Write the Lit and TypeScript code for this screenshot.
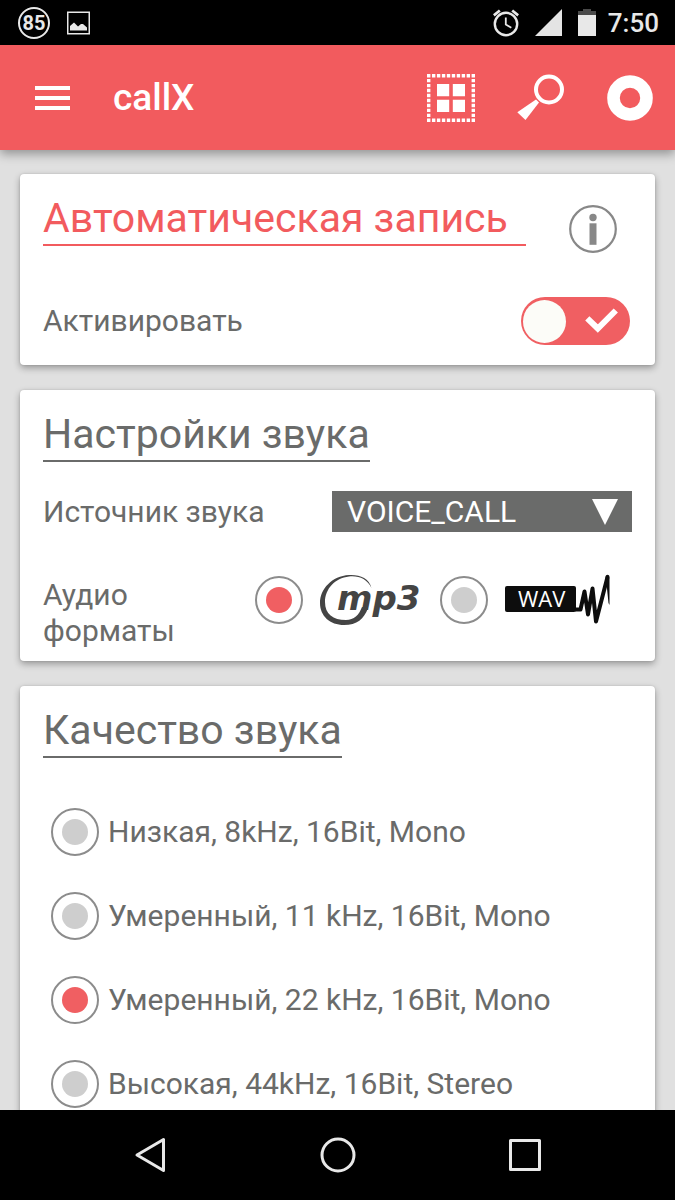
import { LitElement, html, css } from "lit";
import { customElement, state } from "lit/decorators.js";

const QUALITIES = [
  "Низкая, 8kHz, 16Bit, Mono",
  "Умеренный, 11 kHz, 16Bit, Mono",
  "Умеренный, 22 kHz, 16Bit, Mono",
  "Высокая, 44kHz, 16Bit, Stereo",
];

@customElement("status-bar")
class StatusBar extends LitElement {
  static styles = css`
    :host {
      display: flex;
      align-items: center;
      justify-content: space-between;
      height: 45px;
      padding: 0 16px 0 18px;
      background: #000;
      color: #e8e8e8;
      font-size: 26px;
      font-weight: 500;
      line-height: 32px;
    }
    .group {
      display: flex;
      align-items: center;
      gap: 16px;
    }
    .badge {
      display: grid;
      place-items: center;
      box-sizing: border-box;
      width: 32px;
      height: 32px;
      border: 2px solid #e8e8e8;
      border-radius: 50%;
      font-size: 20px;
      font-weight: 700;
      line-height: 28px;
    }
    .time {
      margin-left: -4px;
    }
    svg {
      display: block;
    }
  `;

  render() {
    return html`
      <div class="group">
        <span class="badge">85</span>
        <svg width="24" height="24" viewBox="0 0 24 24">
          <rect x="1.750" y="1.250" width="21.500" height="21.500" fill="none" stroke="#e8e8e8" stroke-width="1.500" />
          <path d="M4 19.500V15l4-3.500 4 4 3-2.500 2 0 4 3.500v3z" fill="#e8e8e8" />
        </svg>
      </div>
      <div class="group">
        <svg width="26" height="28" viewBox="0 0 26 28" fill="none" stroke="#e8e8e8">
          <circle cx="13" cy="15" r="11.200" stroke-width="2.400" />
          <path d="M12.800 8.500v7l5.500 3.300" stroke-width="1.800" />
          <path d="M.8 6.300l6-4.800M25.200 6.300l-6-4.800" stroke-width="2.800" />
        </svg>
        <svg width="27" height="27" viewBox="0 0 27 27"><path d="M27 0v27H0z" fill="#e4e4e4" /></svg>
        <svg width="18" height="27" viewBox="0 0 18 27">
          <path d="M0 6V2h5V0h8v2h5v4z" fill="#4a4a4a" />
          <path d="M0 6h18v21H0z" fill="#e8e8e8" />
        </svg>
        <span class="time">7:50</span>
      </div>
    `;
  }
}

@customElement("nav-bar")
class NavBar extends LitElement {
  static styles = css`
    :host {
      display: flex;
      height: 90px;
      padding: 0 56px;
      background: #000;
    }
    button {
      flex: 1;
      display: grid;
      place-items: center;
      padding: 0;
      border: 0;
      background: none;
    }
  `;

  render() {
    return html`
      <button aria-label="Назад">
        <svg width="36" height="36" viewBox="0 0 36 36" fill="none" stroke="#e8e8e8" stroke-width="3" stroke-linejoin="round">
          <path d="M31.500 2.500v31L5 18z" />
        </svg>
      </button>
      <button aria-label="Домой">
        <svg width="36" height="36" viewBox="0 0 36 36" fill="none" stroke="#e8e8e8" stroke-width="3">
          <circle cx="18" cy="18" r="16" />
        </svg>
      </button>
      <button aria-label="Обзор">
        <svg width="36" height="36" viewBox="0 0 36 36" fill="none" stroke="#e8e8e8" stroke-width="3" stroke-linejoin="round">
          <rect x="3.500" y="3.500" width="29" height="29" />
        </svg>
      </button>
    `;
  }
}

@customElement("app-root")
class AppRoot extends LitElement {
  @state() private quality = 2;
  @state() private format = "mp3";

  static styles = css`
    :host {
      display: flex;
      flex-direction: column;
      height: 100vh;
      background: #e0e0e0;
      color: #6a6b6a;
      font-family: Roboto, "Noto Sans", sans-serif;
      font-size: 30px;
      line-height: 36px;
    }
    svg {
      display: block;
    }
    button {
      padding: 0;
      border: 0;
      background: none;
    }
    input {
      margin: 0;
      appearance: none;
    }

    .toolbar {
      position: relative;
      z-index: 1;
      display: flex;
      align-items: center;
      height: 105px;
      padding: 0 22px 0 35px;
      background: #f25b5e;
      box-shadow: 0 4px 10px rgba(0, 0, 0, 0.35);
    }
    .title {
      flex: 1;
      margin: 0 0 0 43px;
      color: #fff;
      font-size: 37px;
      font-weight: 500;
      line-height: 44px;
    }
    .actions {
      display: flex;
      align-items: center;
      gap: 42px;
    }

    .content {
      flex: 1;
      min-height: 0;
      overflow-y: auto;
      scrollbar-width: none;
      display: flex;
      flex-direction: column;
      gap: 25px;
      padding: 24px 20px;
    }
    .card {
      flex: none;
      padding: 19px 23px 20px;
      border-radius: 4px;
      background: #fff;
      box-shadow: 0 3px 7px rgba(0, 0, 0, 0.32), 0 0 2px rgba(0, 0, 0, 0.15);
    }
    .card.sound {
      padding-bottom: 12px;
    }
    .heading {
      width: fit-content;
      margin: 0;
      border-bottom: 2px solid #6a6b6a;
      font-size: 41px;
      font-weight: 400;
      line-height: 51px;
    }
    .heading.accent {
      padding-right: 18px;
      border-color: #f25b5e;
      color: #f25b5e;
    }
    .head {
      display: flex;
      justify-content: space-between;
      align-items: flex-start;
    }
    .info {
      margin: 12px 15px 0 0;
    }
    .row {
      display: flex;
      justify-content: space-between;
      align-items: center;
      margin-top: 44px;
    }
    .row.source {
      margin-top: 29px;
    }
    .row.formats {
      align-items: flex-start;
      margin-top: 42px;
    }

    .switch,
    .picker {
      display: grid;
      align-items: center;
    }
    .switch > *,
    .picker > * {
      grid-area: 1 / 1;
    }
    .switch {
      margin-right: 2px;
    }
    .switch input {
      display: flex;
      align-items: center;
      width: 109px;
      height: 48px;
      padding: 0 2px;
      box-sizing: border-box;
      border-radius: 24px;
      background: #f05f62;
    }
    .switch input::before {
      content: "";
      width: 43px;
      height: 43px;
      border-radius: 50%;
      background: #fcfcf8;
    }
    .switch svg,
    .picker svg {
      justify-self: end;
      pointer-events: none;
    }
    .switch svg {
      margin-right: 12px;
    }
    .picker svg {
      margin-right: 14px;
    }
    .picker select {
      width: 300px;
      height: 41px;
      padding: 0 15px;
      border: 0;
      border-radius: 0;
      appearance: none;
      background: #6a6b6a;
      color: #fff;
      font: inherit;
    }

    .radio {
      flex: none;
      display: grid;
      place-items: center;
      box-sizing: border-box;
      width: 48px;
      height: 48px;
      border: 2px solid #8c8c8c;
      border-radius: 50%;
    }
    .radio::before {
      content: "";
      width: 26px;
      height: 26px;
      border-radius: 50%;
      background: #cecece;
    }
    .radio:checked::before {
      background: #f05f62;
    }
    .caption {
      flex: 1;
      padding-top: 3px;
    }
    .choices {
      display: flex;
      gap: 18px;
    }
    .choice {
      display: flex;
      align-items: center;
      gap: 17px;
    }
    .qualities {
      display: flex;
      flex-direction: column;
      gap: 36px;
      margin: 50px 0 0;
      padding: 0 8px;
      border: 0;
    }
    .quality {
      display: flex;
      align-items: center;
      gap: 9px;
    }
  `;

  private renderToolbar() {
    return html`
      <header class="toolbar">
        <button aria-label="Меню">
          <svg width="35" height="24" viewBox="0 0 35 24"><path d="M0 0h35v4H0zM0 10h35v4H0zM0 20h35v4H0z" fill="#fff" /></svg>
        </button>
        <h1 class="title">callX</h1>
        <div class="actions">
          <button aria-label="Сетка">
            <svg width="48" height="48" viewBox="0 0 48 48">
              <path d="M0 1.700h48M0 46.300h48M1.700 0v48M46.300 0v48" stroke="#fff" stroke-width="3.400" stroke-dasharray="3.400 1.556" />
              <path d="M10 10h12.200v12.200H10zM25.800 10H38v12.200H25.800zM10 25.800h12.200V38H10zM25.800 25.800H38V38H25.800z" fill="#fff" />
            </svg>
          </button>
          <button aria-label="Поиск">
            <svg width="48" height="48" viewBox="0 0 48 48">
              <circle cx="32" cy="15.500" r="13" fill="none" stroke="#fff" stroke-width="4" />
              <path d="M19 25.500l3 3L8.500 46 .3 38.300z" fill="#fff" />
            </svg>
          </button>
          <button aria-label="Запись">
            <svg width="46" height="46" viewBox="0 0 46 46">
              <circle cx="23" cy="23" r="16.500" fill="none" stroke="#fff" stroke-width="12.600" />
            </svg>
          </button>
        </div>
      </header>
    `;
  }

  private renderMp3() {
    return html`
      <svg width="102" height="52" viewBox="0 0 102 52" role="img" aria-label="mp3">
        <path
          d="M51.500 14C49 4 40 .5 29 1 12 2 0 15 0 29c0 13 10 22 24 22 13 0 20-6 24-17l-6-1c-3 8-8 13-16 13C13 46 5 40 5 28 5 15 15 4 29 2.500 39 1.500 47 5 51.500 14z"
          fill="#444"
        />
        <text x="17" y="36" font-family="DejaVu Sans, sans-serif" font-size="34" font-weight="700" font-style="italic" fill="#444">mp3</text>
      </svg>
    `;
  }

  private renderWav() {
    return html`
      <svg width="127" height="52" viewBox="0 0 127 52" role="img" aria-label="WAV">
        <rect x="0" y="12" width="71" height="26" rx="2" fill="#0d0d0d" />
        <text x="13" y="33" font-family="Open Sans, sans-serif" font-size="22" fill="#fff">WAV</text>
        <path
          d="M70 35.500h5.500l4-18 3.500 23 4.500-26 3.500 33L102.500 3"
          fill="none"
          stroke="#0d0d0d"
          stroke-width="4"
          stroke-linejoin="round"
        />
        <path d="M100.500 3c0-3 4-3 4 0v28l-1-2-2-19z" fill="#0d0d0d" />
      </svg>
    `;
  }

  private renderFormat(name: string, logo: unknown) {
    return html`
      <label class="choice">
        <input
          class="radio"
          type="radio"
          name="format"
          value=${name}
          .checked=${this.format === name}
          @change=${() => (this.format = name)}
        />
        ${logo}
      </label>
    `;
  }

  render() {
    return html`
      <status-bar></status-bar>
      ${this.renderToolbar()}
      <main class="content">
        <section class="card">
          <div class="head">
            <h2 class="heading accent">Автоматическая запись</h2>
            <button class="info" aria-label="Информация">
              <svg width="48" height="48" viewBox="0 0 48 48">
                <circle cx="24" cy="24" r="22.800" fill="none" stroke="#888" stroke-width="2.200" />
                <circle cx="24" cy="12.500" r="3.700" fill="#888" />
                <path d="M20.500 18.300h7v21.500h-7z" fill="#888" />
              </svg>
            </button>
          </div>
          <div class="row">
            <label for="activate">Активировать</label>
            <span class="switch">
              <input id="activate" type="checkbox" checked />
              <svg width="33" height="26" viewBox="0 0 33 26" fill="none" stroke="#fff" stroke-width="6" stroke-linejoin="miter">
                <path d="M2.300 10.300L12.800 20.500 30.800 2.500" />
              </svg>
            </span>
          </div>
        </section>

        <section class="card sound">
          <h2 class="heading">Настройки звука</h2>
          <div class="row source">
            <label for="source">Источник звука</label>
            <span class="picker">
              <select id="source">
                <option>VOICE_CALL</option>
              </select>
              <svg width="26" height="26" viewBox="0 0 26 26"><path d="M0 0h26L13 26z" fill="#fff" /></svg>
            </span>
          </div>
          <div class="row formats">
            <span class="caption">Аудио форматы</span>
            <div class="choices">
              ${this.renderFormat("mp3", this.renderMp3())} ${this.renderFormat("wav", this.renderWav())}
            </div>
          </div>
        </section>

        <section class="card">
          <h2 class="heading">Качество звука</h2>
          <fieldset class="qualities" aria-label="Качество звука">
            ${QUALITIES.map(
              (text, i) => html`
                <label class="quality">
                  <input
                    class="radio"
                    type="radio"
                    name="quality"
                    .checked=${this.quality === i}
                    @change=${() => (this.quality = i)}
                  />
                  ${text}
                </label>
              `
            )}
          </fieldset>
        </section>
      </main>
      <nav-bar></nav-bar>
    `;
  }
}
